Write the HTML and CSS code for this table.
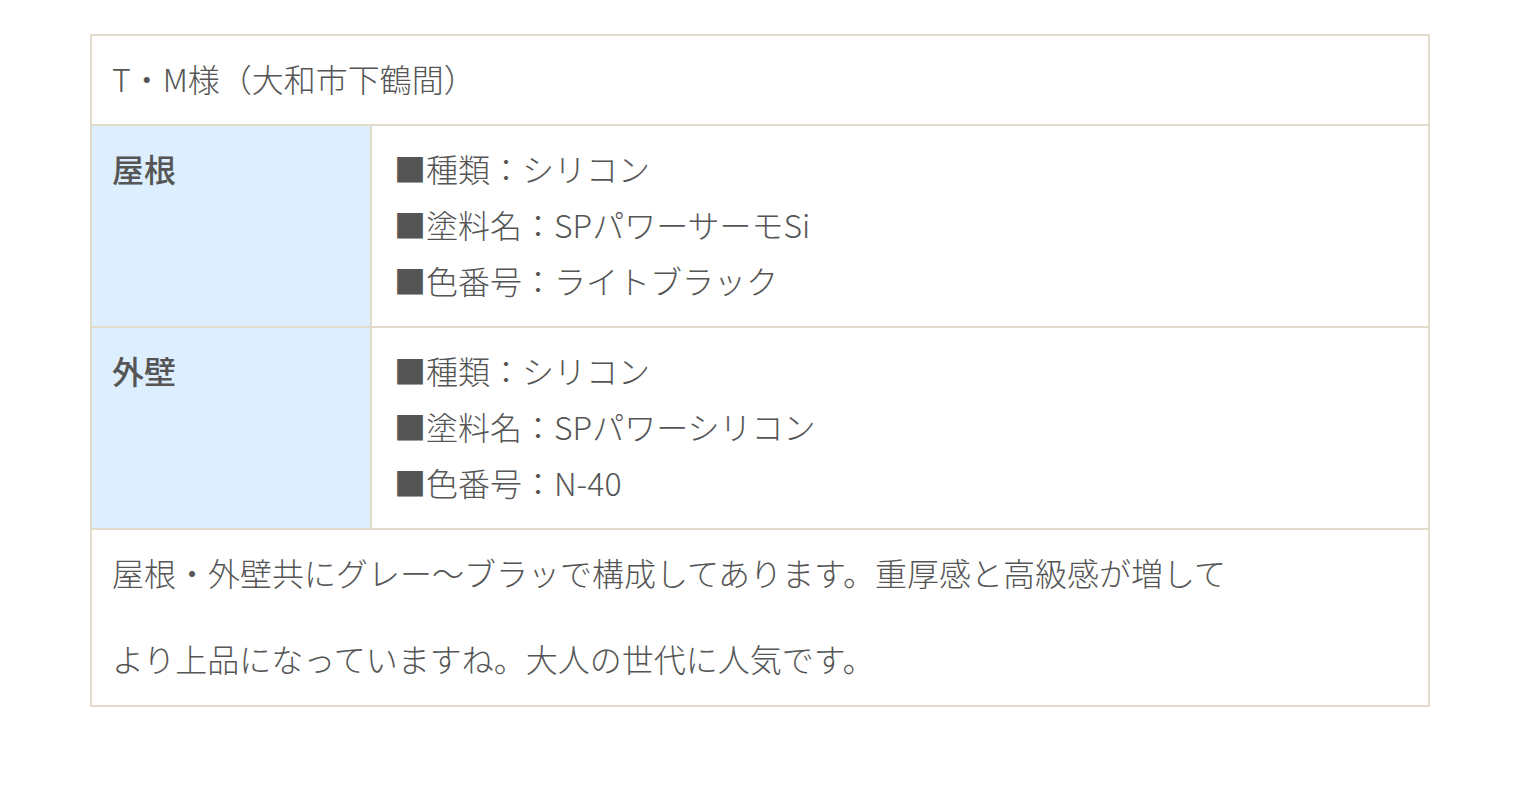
FILE: index.html
```html
<!DOCTYPE html>
<html lang="ja">
<head>
<meta charset="utf-8">
<title>施工事例</title>
<link rel="stylesheet" href="styles.css">
</head>
<body>
<div class="spec">
  <div class="spec-title">T・M様（大和市下鶴間）</div>
  <div class="spec-row">
    <div class="spec-label">屋根</div>
    <div class="spec-body">
      <div class="line">■種類：シリコン</div>
      <div class="line">■塗料名：SPパワーサーモSi</div>
      <div class="line">■色番号：ライトブラック</div>
    </div>
  </div>
  <div class="spec-row">
    <div class="spec-label">外壁</div>
    <div class="spec-body">
      <div class="line">■種類：シリコン</div>
      <div class="line">■塗料名：SPパワーシリコン</div>
      <div class="line">■色番号：N-40</div>
    </div>
  </div>
  <div class="spec-note">
    <p class="para">屋根・外壁共にグレー〜ブラッで構成してあります。重厚感と高級感が増して</p>
    <p class="para">より上品になっていますね。大人の世代に人気です。</p>
  </div>
</div>
</body>
</html>
```

FILE: styles.css
```css
html, body {
  margin: 0;
  padding: 0;
  background: #ffffff;
}
body {
  font-family: "Noto Sans CJK JP", "Noto Sans", sans-serif;
  font-size: 32px;
  font-weight: 300;
  line-height: 56px;
  color: #555555;
  padding-top: 34px;
}
.spec {
  width: 1340px;
  box-sizing: border-box;
  margin: 0 auto;
  border: 2px solid #e2dbcc;
}
.spec-title {
  padding: 14px 20px 18px;
}
.spec-row {
  display: grid;
  grid-template-columns: 280px 1fr;
  border-top: 2px solid #e2dbcc;
}
.spec-label {
  box-sizing: border-box;
  background: #ddeefe;
  border-right: 2px solid #e2dbcc;
  padding: 14px 20px 18px;
  font-weight: 500;
}
.spec-body {
  padding: 14px 22px 18px;
}
.spec-note {
  border-top: 2px solid #e2dbcc;
  padding: 14px 20px 19px;
}
.para {
  margin: 0;
}
.para + .para {
  margin-top: 30px;
}
```
